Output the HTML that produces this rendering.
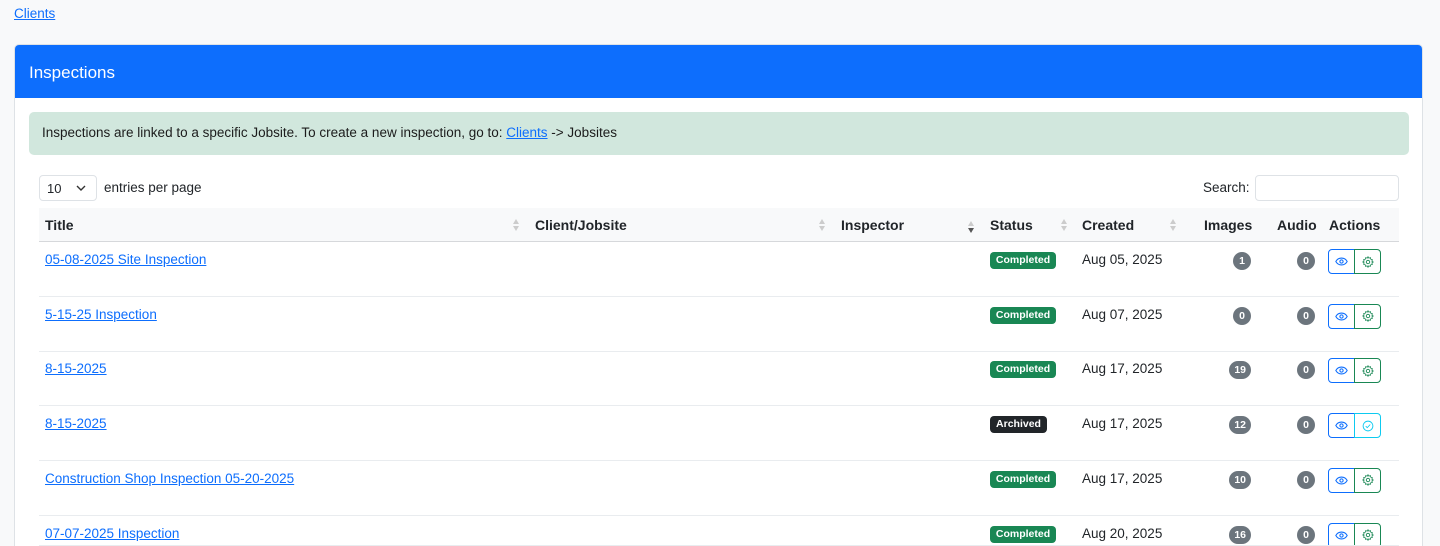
<!DOCTYPE html>
<html><head><meta charset="utf-8"><style>
*{box-sizing:border-box;margin:0;padding:0}
html,body{width:1440px;height:546px;overflow:hidden}
body{background:#f8f9fa;font-family:"Liberation Sans",sans-serif;font-size:13.5px;color:#212529;position:relative}
a{color:#0d6efd;text-decoration:underline}
.abs{position:absolute}
.card{position:absolute;left:14px;top:44px;width:1409px;height:502px;background:#fff;border:1px solid #dee2e6;border-bottom:none;border-radius:5px 5px 0 0;overflow:hidden}
.ch{height:53px;background:#0d6efd;color:#fff;font-size:17px;padding:18px 14px}
.alert{position:absolute;left:29px;top:112px;width:1380px;height:43px;background:#d1e7dd;border-radius:5px;padding:13px 13px;color:#1c1c1c}
.sel{position:absolute;left:39px;top:175px;width:58px;height:26px;border:1px solid #dee2e6;border-radius:4px;background:#fff;font-size:13px;padding:5px 7px}
.thead{position:absolute;left:39px;top:208px;width:1360px;height:34px;background:#f8f9fa;border-bottom:1px solid #d6d8db}
.th{position:absolute;top:9px;font-weight:bold;font-size:14px}
.row{position:absolute;left:39px;width:1360px;height:55px;border-bottom:1px solid #e9ecef;overflow:hidden}
.badge{position:absolute;height:17px;border-radius:4px;color:#fff;font-size:10.5px;font-weight:bold;text-align:center;line-height:17px}
.pill{position:absolute;height:18px;min-width:18px;padding:0 5px;border-radius:9px;background:#6c757d;color:#fff;font-size:10.5px;font-weight:bold;text-align:center;line-height:18px}
.btn{position:absolute;width:27px;height:25px;border:1px solid;display:flex;align-items:center;justify-content:center;background:#fff}
.sort{position:absolute;top:10px;width:8px;height:14px}
#rows{position:absolute;left:0;top:0;width:1440px;height:546px;overflow:hidden}
</style></head><body>
<a class="abs" style="left:14px;top:6px">Clients</a>
<div class="card"><div class="ch">Inspections</div></div>
<div class="alert">Inspections are linked to a specific Jobsite. To create a new inspection, go to: <a>Clients</a> -&gt; Jobsites</div>
<div class="sel">10 <svg style="position:absolute;left:36px;top:9px" width="10" height="7" viewBox="0 0 10 7"><path d="M1 1l4 4 4-4" fill="none" stroke="#333" stroke-width="1.4"/></svg></div>
<div class="abs" style="left:104px;top:180px">entries per page</div>
<div class="abs" style="left:1203px;top:180px">Search:</div>
<div class="abs" style="left:1255px;top:175px;width:144px;height:26px;border:1px solid #dee2e6;border-radius:4px;background:#fff"></div>
<div class="thead">
<div class="th" style="left:6px">Title</div>
<div class="th" style="left:496px">Client/Jobsite</div>
<div class="th" style="left:802px">Inspector</div>
<div class="th" style="left:951px">Status</div>
<div class="th" style="left:1043px">Created</div>
<div class="th" style="left:1165px">Images</div>
<div class="th" style="left:1238px">Audio</div>
<div class="th" style="left:1290px">Actions</div>
<svg class="sort" style="left:473px" viewBox="0 0 8 14"><path d="M4 1L7 6H1z" fill="#ccc"/><path d="M4 13L7 8H1z" fill="#ccc"/></svg>
<svg class="sort" style="left:779px" viewBox="0 0 8 14"><path d="M4 1L7 6H1z" fill="#ccc"/><path d="M4 13L7 8H1z" fill="#ccc"/></svg>
<svg class="sort" style="left:928px;top:12px" viewBox="0 0 8 14"><path d="M4 1L7 6H1z" fill="#ccc"/><path d="M4 13L7 8H1z" fill="#555"/></svg>
<svg class="sort" style="left:1021px" viewBox="0 0 8 14"><path d="M4 1L7 6H1z" fill="#ccc"/><path d="M4 13L7 8H1z" fill="#ccc"/></svg>
<svg class="sort" style="left:1130px" viewBox="0 0 8 14"><path d="M4 1L7 6H1z" fill="#ccc"/><path d="M4 13L7 8H1z" fill="#ccc"/></svg>
</div>
<div id="rows"></div>
<script>
var d=[["05-08-2025 Site Inspection","Completed","Aug 05, 2025","1"],["5-15-25 Inspection","Completed","Aug 07, 2025","0"],["8-15-2025","Completed","Aug 17, 2025","19"],["8-15-2025","Archived","Aug 17, 2025","12"],["Construction Shop Inspection 05-20-2025","Completed","Aug 17, 2025","10"],["07-07-2025 Inspection","Completed","Aug 20, 2025","16"]];
var eye='<svg width="13" height="9" viewBox="0 0 16 10"><path d="M1 5C3 1.5 5.5 0.8 8 0.8S13 1.5 15 5C13 8.5 10.5 9.2 8 9.2S3 8.5 1 5Z" fill="none" stroke="#0d6efd" stroke-width="1.3"/><circle cx="8" cy="5" r="2" fill="none" stroke="#0d6efd" stroke-width="1.3"/></svg>';
var gear='<svg width="12" height="12" viewBox="0 0 16 16"><circle cx="8" cy="8" r="2.3" fill="none" stroke="#198754" stroke-width="1.2"/><path d="M8 1l1.2 1.8 2.1-.6.4 2.1 2.1.6-.6 2.1L15 8l-1.8 1.2.6 2.1-2.1.4-.6 2.1-2.1-.6L8 15l-1.2-1.8-2.1.6-.4-2.1-2.1-.6.6-2.1L1 8l1.8-1.2-.6-2.1 2.1-.4.6-2.1 2.1.6z" fill="none" stroke="#198754" stroke-width="1.1"/></svg>';
var chk='<svg width="12" height="12" viewBox="0 0 16 16"><circle cx="8" cy="8" r="6.5" fill="none" stroke="#0dcaf0" stroke-width="1.2"/><path d="M5 8.2l2 2 4-4.2" fill="none" stroke="#0dcaf0" stroke-width="1.2"/></svg>';
var h='';
d.forEach(function(r,i){var t=242+i*54.7;var c=r[1]=="Completed";var hh=Math.min(55,546-t);
h+='<div class="row" style="top:'+t+'px;height:'+hh+'px">'+
'<a class="abs" style="left:6px;top:10px">'+r[0]+'</a>'+
'<div class="badge" style="left:951px;top:10px;width:'+(c?66:57)+'px;background:'+(c?'#198754':'#212529')+'">'+r[1]+'</div>'+
'<div class="abs" style="left:1043px;top:10px">'+r[2]+'</div>'+
'<div class="pill" style="right:148px;top:10px">'+r[3]+'</div>'+
'<div class="pill" style="right:84px;top:10px;padding:0">0</div>'+
'<div class="btn" style="left:1289px;top:7px;border-color:#0d6efd;border-radius:4px 0 0 4px">'+eye+'</div>'+
'<div class="btn" style="left:1315px;top:7px;border-color:'+(c?'#198754':'#0dcaf0')+';border-radius:0 4px 4px 0">'+(c?gear:chk)+'</div>'+
'</div>';});
document.getElementById('rows').innerHTML=h;
</script>
</body></html>
